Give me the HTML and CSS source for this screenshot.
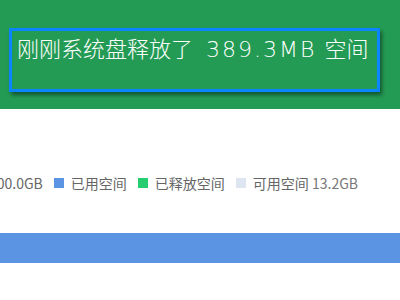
FILE: index.html
```html
<!DOCTYPE html>
<html lang="zh-CN">
<head>
    <meta charset="UTF-8">
    <meta name="viewport" content="width=device-width, initial-scale=1.0">
    <title>系统盘清理</title>
<link rel="stylesheet" href="styles.css">
</head>
<body>
<header class="top">
    <div class="notice">
        <p class="notice-text">刚刚系统盘释放了<span class="num">389.3MB</span>空间</p>
    </div>
</header>

<div class="legend">
    <div class="legend-item"><span class="legend-text">系统盘总空间 共100.0GB</span></div>
    <div class="legend-item"><i class="dot used"></i><span class="legend-text">已用空间</span></div>
    <div class="legend-item"><i class="dot freed"></i><span class="legend-text">已释放空间</span></div>
    <div class="legend-item"><i class="dot free"></i><span class="legend-text">可用空间 <span class="legend-size">13.2GB</span></span></div>
</div>

<div class="bar">
    <div class="bar-used"></div>
</div>
</body>
</html>
```

FILE: styles.css
```css
body{
    margin: 0;
    background: #fff;
    font-family: "Noto Sans CJK SC", "Noto Sans", sans-serif;
    overflow: hidden;
}
.top{
    background: #249b55;
    height: 109px;
    box-sizing: border-box;
    padding: 28px 0 0 9px;
}
.notice{
    width: 371px;
    height: 64px;
    box-sizing: border-box;
    border: 3px solid #0a84ff;
    box-shadow: 2px 3px 4px rgba(0,0,0,.45);
    padding: 1px 5px;
}
.notice-text{
    margin: 0;
    color: #fff;
    font-size: 22px;
    font-weight: 300;
    line-height: 30px;
    white-space: nowrap;
}
.num{
    font-family: "DejaVu Sans", sans-serif;
    font-weight: 200;
    letter-spacing: 2px;
    margin: 0 8px 0 13px;
}

.legend{
    display: flex;
    flex-direction: row;
    justify-content: flex-end;
    align-items: center;
    height: 20px;
    margin-top: 64px;
    padding-right: 42px;
    font-size: 14px;
    color: #666;
    white-space: nowrap;
}
.legend-item{
    display: flex;
    align-items: center;
    margin-left: 11px;
    flex-shrink: 0;
}
.dot{
    width: 10px;
    height: 10px;
    margin-right: 7px;
}
.used{ background: #5b94e3; }
.freed{ background: #26cc70; }
.free{ background: #dde6f0; }
.legend-size{
    color: #777;
}

.bar{
    margin-top: 40px;
    height: 30px;
    background: #dde6f0;
}
.bar-used{
    height: 30px;
    width: 100%;
    background: #5b94e3;
}
```
